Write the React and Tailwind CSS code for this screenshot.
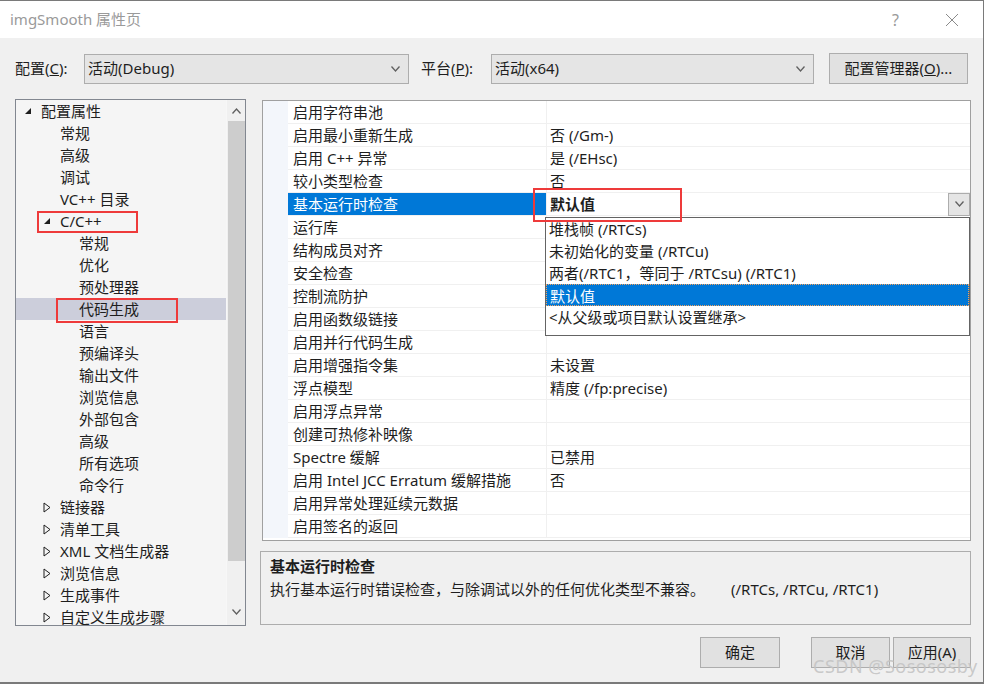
import React from 'react';

const FONT = "font-['Noto_Sans','Noto_Sans_CJK_SC',sans-serif]";

// tree rows: [text, textX, expander, selected]
const tree = [
  ['配置属性', 41, 'open'],
  ['常规', 60],
  ['高级', 60],
  ['调试', 60],
  ['VC++ 目录', 60],
  ['C/C++', 60, 'open'],
  ['常规', 79],
  ['优化', 79],
  ['预处理器', 79],
  ['代码生成', 79, null, true],
  ['语言', 79],
  ['预编译头', 79],
  ['输出文件', 79],
  ['浏览信息', 79],
  ['外部包含', 79],
  ['高级', 79],
  ['所有选项', 79],
  ['命令行', 79],
  ['链接器', 60, 'closed'],
  ['清单工具', 60, 'closed'],
  ['XML 文档生成器', 60, 'closed'],
  ['浏览信息', 60, 'closed'],
  ['生成事件', 60, 'closed'],
  ['自定义生成步骤', 60, 'closed'],
];

const props = [
  ['启用字符串池', ''],
  ['启用最小重新生成', '否 (/Gm-)'],
  ['启用 C++ 异常', '是 (/EHsc)'],
  ['较小类型检查', '否'],
  ['基本运行时检查', '默认值', true],
  ['运行库', ''],
  ['结构成员对齐', ''],
  ['安全检查', ''],
  ['控制流防护', ''],
  ['启用函数级链接', ''],
  ['启用并行代码生成', ''],
  ['启用增强指令集', '未设置'],
  ['浮点模型', '精度 (/fp:precise)'],
  ['启用浮点异常', ''],
  ['创建可热修补映像', ''],
  ['Spectre 缓解', '已禁用'],
  ['启用 Intel JCC Erratum 缓解措施', '否'],
  ['启用异常处理延续元数据', ''],
  ['启用签名的返回', ''],
];

const options = [
  '堆栈帧 (/RTCs)',
  '未初始化的变量 (/RTCu)',
  '两者(/RTC1，等同于 /RTCsu) (/RTC1)',
  '默认值',
  '<从父级或项目默认设置继承>',
];

const Chevron = ({ up, color = '#606060', w = 9 }) => (
  <svg width={w} height="6" viewBox="0 0 9 6" fill="none">
    <path d={up ? 'M0.5 5.5 L4.5 1 L8.5 5.5' : 'M0.5 0.5 L4.5 5 L8.5 0.5'} stroke={color} strokeWidth="1.3" />
  </svg>
);

const Expander = ({ kind }) =>
  kind === 'open' ? (
    <svg width="8" height="8" viewBox="0 0 8 8">
      <polygon points="7,1 7,7 1,7" fill="#1e1e1e" />
    </svg>
  ) : (
    <svg width="8" height="11" viewBox="0 0 8 11">
      <polygon points="1,1 7,5.5 1,10" fill="none" stroke="#1e1e1e" strokeWidth="1" />
    </svg>
  );

const Select = ({ value, width }) => (
  <div className={`h-[30px] ${width} bg-[#e5e5e5] border border-[#adadad] flex items-center justify-between pl-[3px] pr-[8px]`}>
    <span className="text-[15px] text-[#1e1e1e]">{value}</span>
    <Chevron />
  </div>
);

export default function App() {
  return (
    <div className={`${FONT} relative w-[984px] h-[684px] bg-[#f0f0f0] overflow-hidden border-t border-r border-b-2 border-[#7a7a7a] text-[#1e1e1e]`}>
      {/* Title bar */}
      <div className="h-[37px] bg-white flex items-center justify-between pl-[10px] pr-[24px]">
        <span className="text-[15px] text-[#9a9a9a]">imgSmooth 属性页</span>
        <div className="flex items-center gap-[46px] text-[#9a9a9a]">
          <span className="text-[16px]">?</span>
          <svg width="14" height="14" viewBox="0 0 14 14">
            <path d="M1 1 L13 13 M13 1 L1 13" stroke="#8a8a8a" strokeWidth="1" />
          </svg>
        </div>
      </div>

      {/* Config row */}
      <div className="flex items-center mt-[15px] pl-[15px]">
        <span className="text-[15px] w-[69px]">配置(<u>C</u>):</span>
        <Select value="活动(Debug)" width="w-[325px]" />
        <span className="text-[15px] ml-[12px] w-[70px]">平台(<u>P</u>):</span>
        <Select value="活动(x64)" width="w-[323px]" />
        <button className="ml-[15px] h-[31px] w-[139px] bg-[#e1e1e1] border border-[#adadad] text-[15px]">
          配置管理器(<u>O</u>)...
        </button>
      </div>

      {/* Main */}
      <div className="flex mt-[15px] pl-[15px]">
        {/* Tree */}
        <div className="w-[231px] h-[527px] border border-[#828790] bg-[#f5f5f5] flex overflow-hidden">
          <div className="flex-1 flex flex-col">
            {tree.map(([text, x, exp, sel], i) => (
              <div
                key={i}
                className={`h-[22px] shrink-0 flex items-center text-[15px] leading-[22px] whitespace-nowrap ${sel ? 'bg-[#cccedb]' : ''}`}
                style={{ paddingLeft: exp ? x - 16 - 17 : x - 16 }}
              >
                {exp && (
                  <span className="w-[17px] flex items-center justify-start">
                    <Expander kind={exp} />
                  </span>
                )}
                {text}
              </div>
            ))}
          </div>
          {/* scrollbar */}
          <div className="w-[19px] bg-[#f0f0f0] flex flex-col items-center border-l border-[#f7f7f7]">
            <div className="h-[21px] flex items-center justify-center">
              <Chevron up />
            </div>
            <div className="w-[17px] h-[440px] bg-[#cdcdcd]" />
            <div className="flex-1" />
            <div className="h-[26px] flex items-center justify-center">
              <Chevron />
            </div>
          </div>
        </div>

        {/* Right column */}
        <div className="ml-[14px] flex flex-col">
          {/* Property grid */}
          <div className="relative ml-[2px] mt-[1px] w-[709px] h-[441px] border border-[#a0a0a0] bg-white">
            {props.map(([name, value, sel], i) => (
              <div key={i} className="flex h-[23px] text-[15px] leading-[22px]">
                <div className="w-[25px] bg-[#f3f6fb]" />
                <div className={`w-[258px] pl-[5px] border-b border-[#f0f0f0] whitespace-nowrap ${sel ? 'bg-[#0078d7] text-white border-[#0078d7]' : ''}`}>
                  {name}
                </div>
                <div className="flex-1 border-l border-b border-[#f0f0f0] pl-[3px] flex items-center justify-between whitespace-nowrap">
                  <span className={sel ? 'font-bold' : ''}>{value}</span>
                  {sel && (
                    <div className="w-[22px] h-[23px] bg-[#e5e5e5] border border-[#adadad] flex items-center justify-center">
                      <Chevron />
                    </div>
                  )}
                </div>
              </div>
            ))}

            {/* dropdown list */}
            <div className="absolute left-[282px] top-[116px] w-[425px] h-[119px] bg-white border border-[#646464] flex flex-col">
              {options.map((o, i) => (
                <div
                  key={i}
                  className={`h-[22px] leading-[22px] text-[15px] pl-[3px] whitespace-nowrap ${i === 3 ? 'bg-[#0078d7] text-white border border-dotted border-[#f5a25d]' : ''}`}
                >
                  {o}
                </div>
              ))}
            </div>

            {/* red highlight on value */}
            <div className="absolute left-[270px] top-[87px] w-[149px] h-[34px] border-2 border-[#ee3a3a]" />
          </div>

          {/* Description */}
          <div className="mt-[10px] w-[711px] h-[74px] border border-[#adadad] px-[9px] pt-[3px]">
            <div className="text-[15px] font-bold leading-[22px]">基本运行时检查</div>
            <div className="text-[15px] leading-[24px] whitespace-nowrap">
              执行基本运行时错误检查，与除调试以外的任何优化类型不兼容。<span className="ml-[26px]">(/RTCs, /RTCu, /RTC1)</span>
            </div>
          </div>

          {/* Buttons */}
          <div className="flex justify-end gap-[3px] mt-[12px]">
            <button className="w-[80px] h-[31px] bg-[#e1e1e1] border border-[#adadad] text-[15px] mr-[28px]">确定</button>
            <button className="w-[79px] h-[31px] bg-[#e1e1e1] border border-[#adadad] text-[15px]">取消</button>
            <button className="w-[78px] h-[31px] bg-[#e1e1e1] border border-[#adadad] text-[15px]">应用(A)</button>
          </div>
        </div>
      </div>

      {/* red boxes on tree */}
      <div className="absolute left-[37px] top-[210px] w-[101px] h-[22px] border-2 border-[#ee3a3a]" />
      <div className="absolute left-[56px] top-[297px] w-[122px] h-[25px] border-2 border-[#ee3a3a]" />

      {/* watermark */}
      <div className="absolute left-[813px] top-[652px] text-[18px] text-[#c4c4c4]/90 tracking-[0.5px] whitespace-nowrap">
        CSDN @Sosososby
      </div>
    </div>
  );
}
